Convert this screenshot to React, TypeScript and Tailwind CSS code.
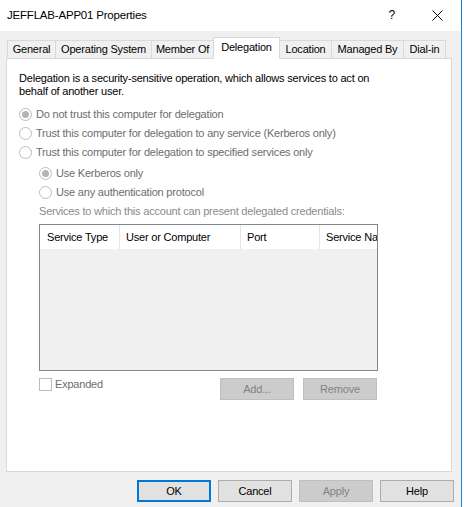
import React from "react";

const font = { fontFamily: '"Liberation Sans", Arial, sans-serif' };

function Radio({ checked, label, indent = false }: { checked?: boolean; label: string; indent?: boolean }) {
  return (
    <div className={`flex h-[19px] items-center ${indent ? "pl-[20px]" : ""}`}>
      <span className="flex h-[13px] w-[13px] shrink-0 items-center justify-center rounded-full border border-[#bcbcbc] bg-white">
        {checked && <span className="h-[7px] w-[7px] rounded-full bg-[#b4b4b4]" />}
      </span>
      <span className="ml-[4px] whitespace-nowrap text-[#6d6d6d]">{label}</span>
    </div>
  );
}

function Tab({ label, w, active }: { label: string; w: number; active?: boolean }) {
  if (active) {
    return (
      <div
        className="relative z-10 -mb-px flex h-[22px] items-start justify-center whitespace-nowrap border border-b-0 border-[#d9d9d9] bg-white pt-[3px]"
        style={{ width: w }}
      >
        {label}
      </div>
    );
  }
  return (
    <div
      className="-ml-px flex h-[18px] items-center justify-center whitespace-nowrap border border-b-0 border-[#d9d9d9] bg-[#f0f0f0] first:ml-0"
      style={{ width: w }}
    >
      {label}
    </div>
  );
}

function DlgButton({ label, primary, disabled }: { label: string; primary?: boolean; disabled?: boolean }) {
  const cls = primary
    ? "border-2 border-[#0078d7] bg-[#e1e1e1] text-black"
    : disabled
    ? "border border-[#bfbfbf] bg-[#cccccc] text-[#838383]"
    : "border border-[#adadad] bg-[#e1e1e1] text-black";
  return <div className={`flex h-[22px] w-[74px] items-center justify-center ${cls}`}>{label}</div>;
}

export default function App() {
  return (
    <div
      className="flex h-[507px] w-[464px] overflow-hidden bg-[#f0f0f0] text-[11px] leading-[13px] tracking-[-0.2px] text-black"
      style={font}
    >
      <div className="flex w-[461px] flex-col">
        {/* title bar */}
        <div className="flex h-[31px] items-center bg-white pl-[7px]">
          <span className="text-[11.5px]">JEFFLAB-APP01 Properties</span>
          <span className="ml-auto mr-[37px] text-[12px]">?</span>
          <svg width="11" height="11" viewBox="0 0 11 11" className="mr-[18px]">
            <path d="M0.5 0.5 L10.5 10.5 M10.5 0.5 L0.5 10.5" stroke="#000" strokeWidth="1" />
          </svg>
        </div>

        {/* tab strip */}
        <div className="flex items-end pl-[7px] pt-[6px]">
          <Tab label="General" w={49} />
          <Tab label="Operating System" w={97} />
          <Tab label="Member Of" w={63} />
          <div className="-ml-px">
            <Tab label="Delegation" w={67} active />
          </div>
          <Tab label="Location" w={53} />
          <Tab label="Managed By" w={73} />
          <Tab label="Dial-in" w={43} />
        </div>

        {/* tab page */}
        <div className="ml-[6px] flex h-[414px] w-[446px] flex-col border border-[#d9d9d9] bg-white pl-[12px] pt-[13px]">
          <p className="w-[370px]">
            Delegation is a security-sensitive operation, which allows services to act on behalf of another user.
          </p>
          <div className="mt-[7px] flex flex-col">
            <Radio checked label="Do not trust this computer for delegation" />
            <Radio label="Trust this computer for delegation to any service (Kerberos only)" />
            <Radio label="Trust this computer for delegation to specified services only" />
            <div className="mt-[2px]" />
            <Radio indent checked label="Use Kerberos only" />
            <Radio indent label="Use any authentication protocol" />
          </div>
          <div className="ml-[20px] flex h-[19px] items-center text-[#8a8a8a]">
            Services to which this account can present delegated credentials:
          </div>
          <div className="ml-[20px] mt-[3px] flex h-[147px] w-[339px] flex-col overflow-hidden border border-[#828790] bg-[#f0f0f0]">
            <div className="flex h-[24px] shrink-0 bg-white">
              <div className="flex w-[80px] shrink-0 items-center border-r border-[#e5e5e5] pl-[7px]">Service Type</div>
              <div className="flex w-[121px] shrink-0 items-center border-r border-[#e5e5e5] pl-[6px]">User or Computer</div>
              <div className="flex w-[79px] shrink-0 items-center border-r border-[#e5e5e5] pl-[6px]">Port</div>
              <div className="flex min-w-0 flex-1 items-center overflow-hidden whitespace-nowrap pl-[6px]">Service Name</div>
            </div>
          </div>
          <div className="ml-[20px] mt-[7px] flex w-[338px] items-start">
            <div className="flex items-center">
              <span className="h-[13px] w-[13px] border border-[#bcbcbc] bg-white" />
              <span className="ml-[3px] text-[#6d6d6d]">Expanded</span>
            </div>
            <div className="ml-auto flex gap-[9px]">
              <DlgButton label="Add..." disabled />
              <DlgButton label="Remove" disabled />
            </div>
          </div>
        </div>

        {/* dialog buttons */}
        <div className="mt-[8px] flex justify-end gap-[7px] pr-[7px]">
          <DlgButton label="OK" primary />
          <DlgButton label="Cancel" />
          <DlgButton label="Apply" disabled />
          <DlgButton label="Help" />
        </div>
      </div>
      <div className="w-px bg-[#1883d7]" />
      <div className="flex-1 bg-white" />
    </div>
  );
}
